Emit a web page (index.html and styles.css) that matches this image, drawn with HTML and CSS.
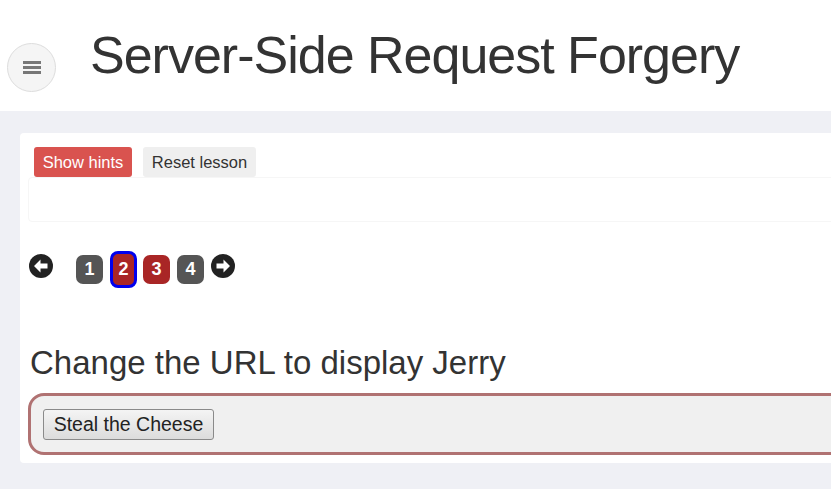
FILE: index.html
```html
<!DOCTYPE html>
<html>
<head>
<meta charset="utf-8">
<link rel="stylesheet" href="styles.css">
</head>
<body>
<header class="top">
  <button class="menu-btn" aria-label="menu">
    <svg width="18" height="13" viewBox="0 0 18 13"><rect x="0" y="0" width="18" height="3" fill="#777"/><rect x="0" y="5" width="18" height="3" fill="#777"/><rect x="0" y="10" width="18" height="3" fill="#777"/></svg>
  </button>
  <h1 class="title">Server-Side Request Forgery</h1>
</header>
<main class="main">
  <section class="card">
    <div class="lesson-btns">
      <button class="btn btn-hints">Show hints</button>
      <button class="btn btn-reset">Reset lesson</button>
    </div>
    <div class="hints-box"></div>
    <nav class="pager">
      <svg class="arrow" width="24" height="24" viewBox="0 0 24 24"><circle cx="12" cy="12" r="12" fill="#222"/><path d="M5 12 L11.5 5.5 L11.5 9.5 L18.5 9.5 L18.5 14.5 L11.5 14.5 L11.5 18.5 Z" fill="#fff"/></svg>
      <span class="pages">
        <span class="page grey">1</span>
        <span class="page red current">2</span>
        <span class="page red">3</span>
        <span class="page grey">4</span>
      </span>
      <svg class="arrow" width="24" height="24" viewBox="0 0 24 24"><circle cx="12" cy="12" r="12" fill="#222"/><path d="M19 12 L12.5 5.5 L12.5 9.5 L5.5 9.5 L5.5 14.5 L12.5 14.5 L12.5 18.5 Z" fill="#fff"/></svg>
    </nav>
    <h2 class="task">Change the URL to display Jerry</h2>
    <form class="attack">
      <button type="button" class="steal">Steal the Cheese</button>
    </form>
  </section>
</main>
</body>
</html>
```
FILE: styles.css
```css
html, body {
  margin: 0;
  padding: 0;
  overflow: hidden;
}
body {
  background: #eff0f5;
  font-family: "Liberation Sans", Arial, sans-serif;
  color: #333;
  width: 831px;
  height: 489px;
}
.top {
  background: #fff;
  height: 111px;
  display: flex;
  align-items: flex-start;
}
.menu-btn {
  width: 49px;
  height: 49px;
  margin: 43px 0 0 7px;
  border-radius: 50%;
  border: 1px solid #ddd;
  background: #f5f5f5;
  padding: 0;
  display: flex;
  align-items: center;
  justify-content: center;
}
.title {
  margin: 25px 0 0 34px;
  font-weight: normal;
  font-size: 52px;
  letter-spacing: -1px;
  line-height: 60px;
  color: #333;
  white-space: nowrap;
}
.main {
  padding: 22px 0 0 20px;
}
.card {
  width: 1000px;
  background: #fff;
  border-radius: 4px;
  padding: 14px 0 8px 8px;
}
.lesson-btns {
  display: flex;
  gap: 11px;
  padding-left: 6px;
}
.btn {
  height: 30px;
  border: none;
  border-radius: 3px;
  font-family: "Liberation Sans", Arial, sans-serif;
  font-size: 16.5px;
  padding: 0;
}
.btn-hints {
  background: #d9534f;
  color: #fff;
  width: 98px;
}
.btn-reset {
  background: #efefef;
  color: #333;
  width: 113px;
}
.hints-box {
  height: 43px;
  border: 1px solid #f6f6f6;
  border-radius: 4px;
}
.pager {
  display: flex;
  align-items: flex-start;
  margin-top: 32px;
  padding-left: 1px;
}
.arrow {
  flex: none;
}
.pages {
  display: flex;
  gap: 6px;
  margin: 1px 7px 0 23px;
}
.page {
  width: 27px;
  height: 29px;
  border-radius: 7px;
  color: #fff;
  font-weight: bold;
  font-size: 18px;
  display: flex;
  align-items: center;
  justify-content: center;
  box-sizing: border-box;
}
.grey { background: #555; }
.red { background: #a92626; }
.current {
  border: 3px solid #0000ee;
  height: 37px;
  margin-top: -4px;
  margin-left: 1px;
  border-radius: 8px;
}
.page:last-child {
  margin-left: 1px;
}
.task {
  font-weight: normal;
  font-size: 33px;
  line-height: 38px;
  margin: 56px 0 0 2px;
  color: #333;
}
.attack {
  margin: 11px 0 0 0;
  height: 56px;
  border: 3px solid #b07272;
  border-radius: 16px;
  background: #f0f0f0;
  display: flex;
  align-items: center;
  padding-left: 12px;
}
.steal {
  height: 31px;
  width: 171px;
  font-family: "Liberation Sans", Arial, sans-serif;
  font-size: 19.5px;
  color: #222;
  border: 1px solid #8a8a8a;
  border-radius: 3px;
  background: linear-gradient(#f4f4f4, #dcdcdc);
  padding: 0;
}
```
